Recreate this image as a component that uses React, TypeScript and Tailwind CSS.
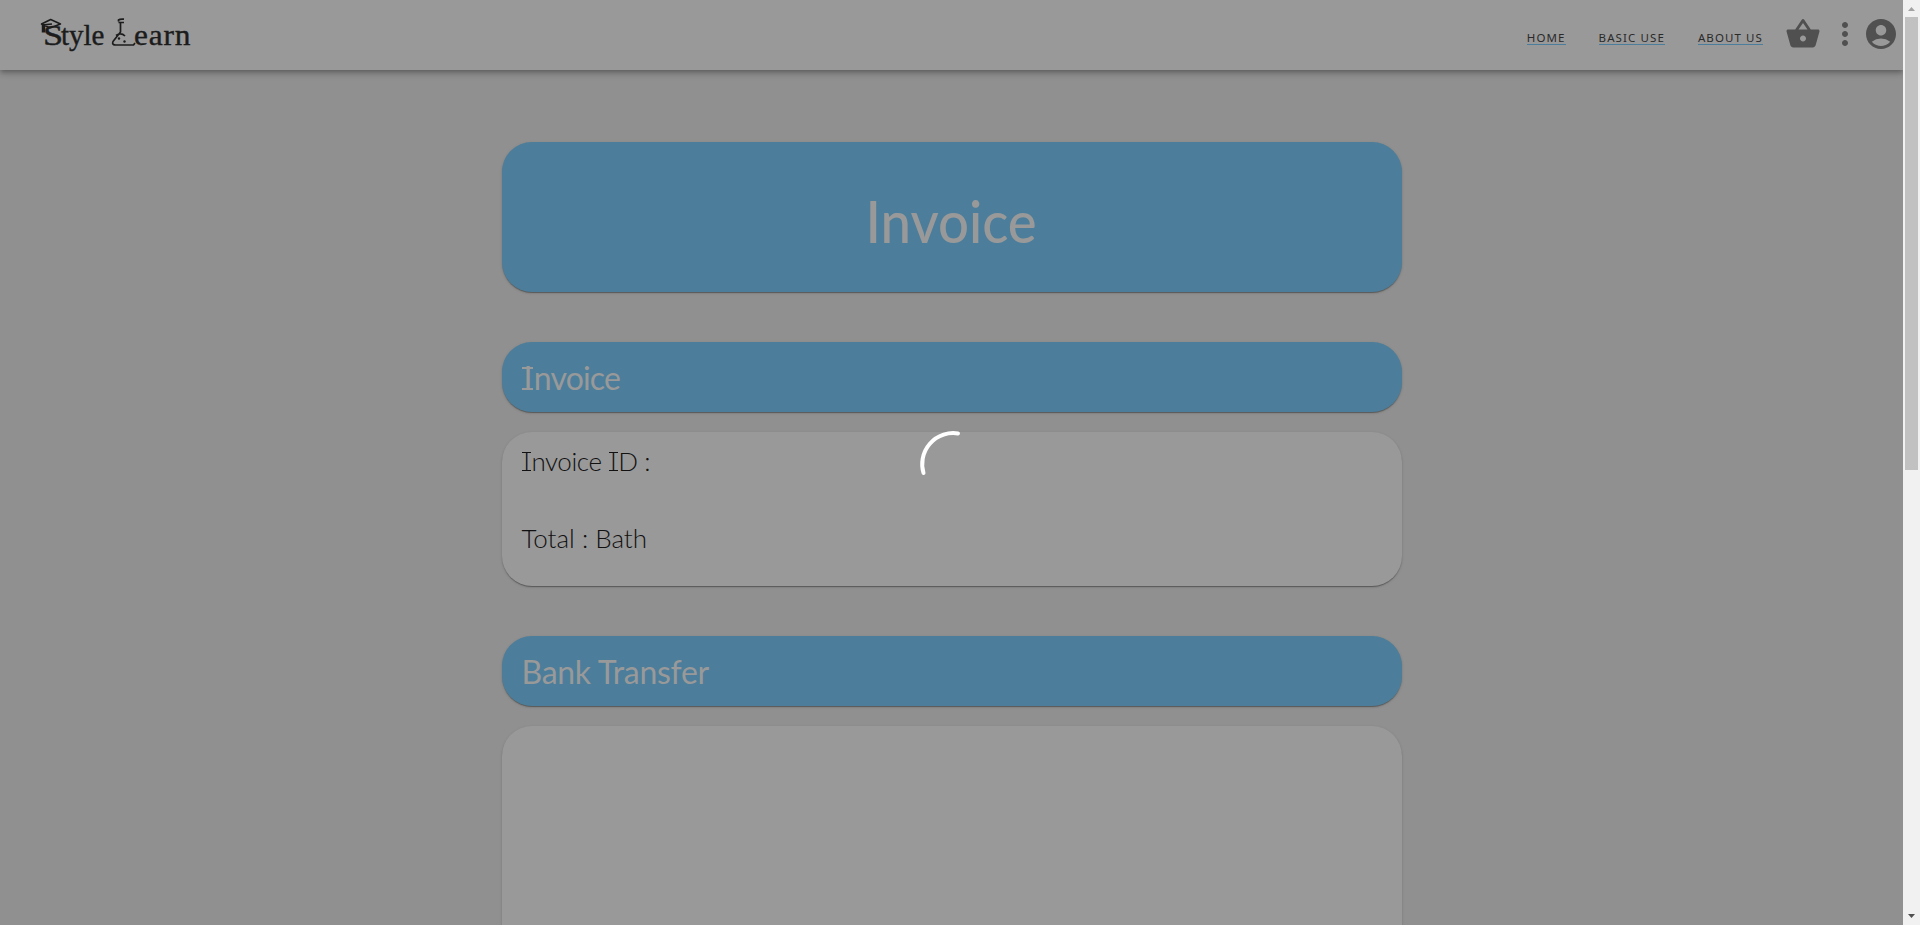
import { MdAccountCircle, MdMoreVert, MdShoppingBasket } from "react-icons/md";
import type { ReactNode } from "react";

const cardShadow =
  "shadow-[0_2px_1px_-1px_rgba(0,0,0,0.2),0_1px_1px_0_rgba(0,0,0,0.14),0_1px_3px_0_rgba(0,0,0,0.14)]";

// Capital I with slab serifs drawn above and below the stem.
function SerifI({ thin = false }: { thin?: boolean }) {
  const weight = thin ? "before:h-px after:h-px" : "before:h-[2px] after:h-[2px]";
  return (
    <span
      className={`relative inline-block w-[0.38em] text-center leading-none before:absolute before:top-[0.165em] before:right-[0.02em] before:left-[0.02em] before:bg-current after:absolute after:right-[0.02em] after:bottom-[0.11em] after:left-[0.02em] after:bg-current ${weight}`}
    >
      I
    </span>
  );
}

function Logo() {
  return (
    <div className="relative ml-[43px] h-[40px] w-[160px] text-[#1c1c1c]">
      <svg className="absolute inset-0 overflow-visible" width="160" height="40" viewBox="0 0 160 40" fill="none" stroke="currentColor" strokeLinejoin="round">
        <path d="M-1.500 9 L7.700 4.500 L17.500 9 L7 13 Z M-1 10 L9 9" strokeWidth="1.5" />
        <path d="M0.500 9.500 V17.500" strokeWidth="3.500" />
        <path d="M75.500 6.500 V5 Q77 3.800 81 4.200 M75.500 7.500 H81 M77.500 8 V17 L70 26.500 Q68.500 30 73 30 H90.500 L92 28 M73 20.500 Q78 17 82 21" strokeWidth="1.7" />
        <circle cx="76" cy="23.500" r="1.200" fill="currentColor" stroke="none" />
        <circle cx="81.500" cy="26.500" r="1.200" fill="currentColor" stroke="none" />
      </svg>
      <span className="absolute top-[-1px] left-0 font-['Liberation_Serif'] text-[29px] leading-[42px] [-webkit-text-stroke:0.4px_currentColor]">
        <span className="inline-block w-[18px] origin-left scale-x-125">S</span>tyle
      </span>
      <span className="absolute top-[-1px] left-[91px] font-['Liberation_Serif'] text-[29px] leading-[42px] tracking-[0.8px] [-webkit-text-stroke:0.4px_currentColor]">
        <span className="inline-block origin-left scale-x-108">earn</span>
      </span>
    </div>
  );
}

function SectionTitle({ children }: { children: ReactNode }) {
  return (
    <h2 className={`flex h-[70px] items-center rounded-[30px] bg-[#4c7e9b] px-5 pt-[2px] text-[32px] text-[#999] ${cardShadow}`}>
      <span>{children}</span>
    </h2>
  );
}

export default function App() {
  return (
    <div className="flex h-[925px] w-[1920px] overflow-hidden bg-[#909090] font-['Lato',sans-serif]">
      <div className="flex w-[1903px] flex-col">
        <header className="flex h-[70px] shrink-0 items-center bg-[#999] shadow-[0_2px_4px_-1px_rgba(0,0,0,0.2),0_4px_5px_0_rgba(0,0,0,0.14),0_1px_10px_0_rgba(0,0,0,0.12)]">
          <Logo />
          <nav className="ml-auto flex gap-[33px] pt-[7px] font-['Noto_Sans'] text-[11.5px] tracking-[1.1px] text-[#2a2a2a]">
            <a className="border-b border-[#4c7e9b] leading-[12px]">HOME</a>
            <a className="border-b border-[#4c7e9b] leading-[12px]">BASIC USE</a>
            <a className="border-b border-[#4c7e9b] leading-[12px]">ABOUT US</a>
          </nav>
          <div className="mr-[4px] mb-[2px] ml-[22px] flex items-center text-[36px] text-[#505050]">
            <MdShoppingBasket />
            <MdMoreVert className="ml-[6px]" />
            <MdAccountCircle />
          </div>
        </header>
        <main className="mx-auto mt-[72px] flex w-[900px] flex-col">
          <h1 className={`flex h-[150px] items-center justify-center rounded-[30px] bg-[#4c7e9b] pt-[6px] text-[58px] font-medium text-[#999] ${cardShadow}`}>
            <span className="scale-x-94">Invoice</span>
          </h1>
          <section className="mt-[50px]">
            <SectionTitle>
              <span className="tracking-[-0.8px]"><SerifI />nvoice</span>
            </SectionTitle>
            <div className={`mt-5 h-[154px] rounded-[30px] bg-[#999] px-5 pt-[10px] text-[26px] font-light text-[#111] ${cardShadow}`}>
              <p className="h-[77px] leading-[38px] tracking-[-0.4px]"><SerifI thin />nvoice <SerifI thin />D :</p>
              <p className="leading-[38px]">Total : Bath</p>
            </div>
          </section>
          <section className="mt-[50px]">
            <SectionTitle>
              <span className="tracking-[-0.3px]">Bank Transfer</span>
            </SectionTitle>
            <div className={`mt-5 h-[400px] rounded-[30px] bg-[#999] ${cardShadow}`} />
          </section>
        </main>
      </div>
      <div className="flex w-[17px] flex-col items-center bg-[#f1f1f1]">
        <svg width="17" height="17" viewBox="0 0 17 17"><path d="M5 11 L8.500 7 L12 11 Z" fill="#a3a3a3" /></svg>
        <div className="h-[453px] w-[13px] bg-[#c1c1c1]" />
        <svg className="mt-auto" width="17" height="17" viewBox="0 0 17 17"><path d="M5 6 L8.500 10 L12 6 Z" fill="#505050" /></svg>
      </div>
      <svg className="absolute top-[430px] left-[918px]" width="66" height="66" viewBox="0 0 66 66" fill="none">
        <path d="M40 3.500 A31 31 0 0 0 5.500 43" stroke="white" strokeWidth="4" strokeLinecap="round" />
      </svg>
    </div>
  );
}
